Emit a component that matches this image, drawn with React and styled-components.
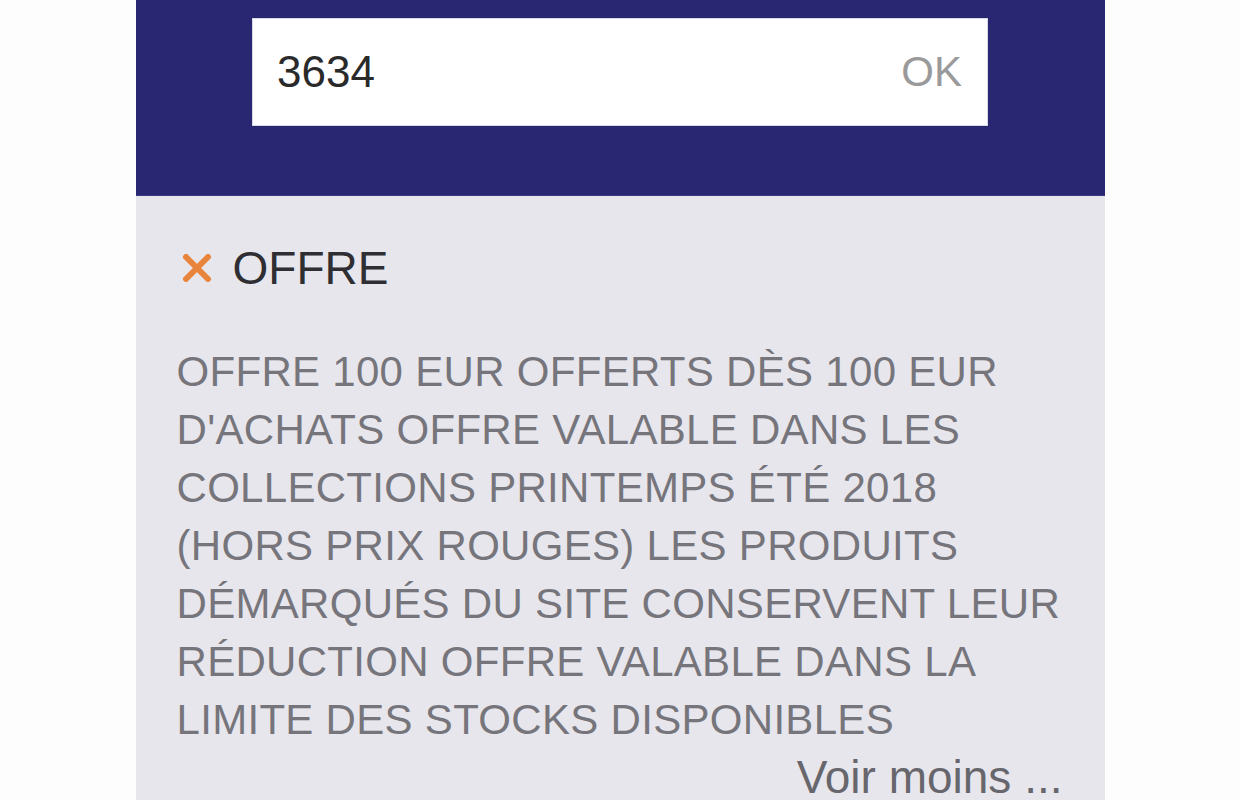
import React from 'react';
import styled, { createGlobalStyle } from 'styled-components';

const GlobalStyle = createGlobalStyle`
  html, body {
    margin: 0;
    padding: 0;
    background: #fdfdfd;
    font-family: "Liberation Sans", Arial, sans-serif;
    -webkit-font-smoothing: antialiased;
  }
`;

const Panel = styled.div`
  width: 969px;
  height: 800px;
  margin: 0 auto;
  background: #e7e6ed;
  overflow: hidden;
`;

const Header = styled.div`
  box-sizing: border-box;
  height: 196px;
  padding-top: 18px;
  background: #292772;
  border-bottom: 1px solid #3a3880;
`;

const SearchBox = styled.div`
  box-sizing: border-box;
  width: 736px;
  height: 108px;
  margin: 0 auto;
  padding: 0 25px 0 24px;
  display: flex;
  align-items: center;
  justify-content: space-between;
  background: #fff;
  border: 1px solid #d9d9e6;
`;

const SearchValue = styled.span`
  font-size: 44px;
  color: #2a2a2a;
`;

const OkButton = styled.span`
  font-size: 42px;
  color: #9a9a9a;
`;

const Content = styled.div`
  padding: 42px 40px 0 41px;
`;

const Title = styled.div`
  display: flex;
  align-items: center;
  gap: 20px;
  height: 60px;
  padding-left: 4px;
  font-size: 46px;
  line-height: 60px;
  color: #2e2e33;
`;

const Body = styled.div`
  margin-top: 45px;
  font-size: 42px;
  line-height: 58px;
  letter-spacing: 0.3px;
  color: #76757b;
  text-transform: uppercase;
`;

const Line = styled.div`
  white-space: nowrap;
`;

const MoreLink = styled.div`
  text-align: right;
  padding-right: 2px;
  font-size: 46px;
  line-height: 56px;
  color: #67666c;
`;

const CloseIcon = () => (
  <svg width="32" height="28" viewBox="0 0 32 28">
    <path d="M5 3 L27 25 M27 3 L5 25" stroke="#e8843b" strokeWidth="6" strokeLinecap="round" />
  </svg>
);

const lines = [
  'OFFRE 100 EUR OFFERTS DÈS 100 EUR',
  "D'ACHATS OFFRE VALABLE DANS LES",
  'COLLECTIONS PRINTEMPS ÉTÉ 2018',
  '(HORS PRIX ROUGES) LES PRODUITS',
  'DÉMARQUÉS DU SITE CONSERVENT LEUR',
  'RÉDUCTION OFFRE VALABLE DANS LA',
  'LIMITE DES STOCKS DISPONIBLES',
];

const App = () => {
  return (
    <>
      <GlobalStyle />
      <Panel>
        <Header>
          <SearchBox>
            <SearchValue>3634</SearchValue>
            <OkButton>OK</OkButton>
          </SearchBox>
        </Header>
        <Content>
          <Title>
            <CloseIcon />
            OFFRE
          </Title>
          <Body>
            {lines.map(l => (
              <Line key={l}>{l}</Line>
            ))}
          </Body>
          <MoreLink>Voir moins ...</MoreLink>
        </Content>
      </Panel>
    </>
  );
};

export default App;
